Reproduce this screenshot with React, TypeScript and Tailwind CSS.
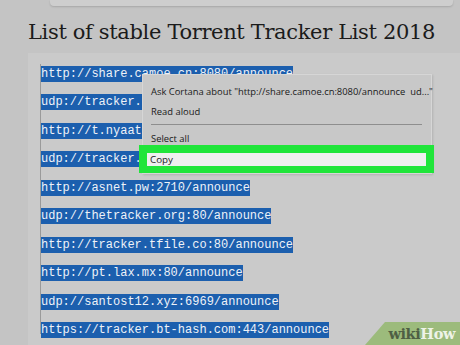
import React from 'react';

const links = [
    'http://share.camoe.cn:8080/announce',
    'udp://tracker.internetwarriors.net:1337/announce',
    'http://t.nyaatracker.com:80/announce',
    'udp://tracker.tiny-vps.com:6969/announce',
    'http://asnet.pw:2710/announce',
    'udp://thetracker.org:80/announce',
    'http://tracker.tfile.co:80/announce',
    'http://pt.lax.mx:80/announce',
    'udp://santost12.xyz:6969/announce',
    'https://tracker.bt-hash.com:443/announce',
];

const App: React.FC = () => {
    return (
        <div className="relative w-[460px] h-[345px] overflow-hidden bg-[#c4c4c4] flex flex-col">
            <div className="ml-[50px] w-[403px] h-[6px] shrink-0 bg-[#cecece] rounded-b-sm shadow-[0_1px_2px_rgba(0,0,0,0.15)]" />
            <h1 className="mt-[12px] ml-[28px] h-[35px] shrink-0 text-[21px] leading-[28px] text-[#1b1b1b] whitespace-nowrap tracking-[-0.35px]" style={{ fontFamily: '"DejaVu Serif", serif' }}>
                List of stable Torrent Tracker List 2018
            </h1>
            <div className="ml-[28px] flex-1 bg-[#cacaca] pt-[11px] pl-[12px]">
                <ul className="border-l border-[#9a9a9a] flex flex-col gap-[14.45px]">
                    {links.map((l) => (
                        <li key={l} className="h-[14px] leading-[14px]">
                            <span className="bg-[#1c5fae] text-[#eef2f8] text-[12px] py-[1px]" style={{ fontFamily: '"Liberation Mono", monospace' }}>
                                {l}
                            </span>
                        </li>
                    ))}
                </ul>
            </div>

            {/* context menu */}
            <div className="absolute left-[142px] top-[74px] w-[290px] h-[100px] bg-[#c8c8c8] border border-[#d6d6d6] shadow-[1px_1px_2px_rgba(0,0,0,0.12)] text-[9.4px] text-[#1a1a1a] px-[8px] pt-[10px]" style={{ fontFamily: '"Open Sans", sans-serif' }}>
                <div className="h-[20px] leading-[14px] whitespace-nowrap">Ask Cortana about "http://share.camoe.cn:8080/announce&nbsp; ud..."</div>
                <div className="h-[19px] leading-[14px]">Read aloud</div>
                <div className="h-px bg-[#8e8e8e] mr-[1px]" />
                <div className="mt-[7px] leading-[14px]">Select all</div>
            </div>

            <div className="absolute left-[139px] top-[145px] w-[295px] h-[28px] bg-[#20e53a] pl-[8px] pr-[8px] pt-[8px]">
                <div className="h-[13px] bg-[#efefef] text-[9.8px] leading-[13px] text-[#1a1a1a] pl-[3px]" style={{ fontFamily: '"Open Sans", sans-serif' }}>
                    Copy
                </div>
            </div>

            {/* wikiHow mark */}
            <div className="absolute right-0 bottom-0 w-[95px] h-[23px] bg-[#9cbb7c] [clip-path:polygon(20px_0,100%_0,100%_100%,0_100%)] flex items-center justify-end pr-[5px] pt-[1px]">
                <span className="text-[14.5px] font-bold leading-none tracking-[-0.4px]" style={{ fontFamily: '"DejaVu Serif", serif' }}>
                    <span className="text-[#4e5f44]">wiki</span><span className="text-[#eef3e8]">How</span>
                </span>
            </div>
        </div>
    );
};

export default App;
